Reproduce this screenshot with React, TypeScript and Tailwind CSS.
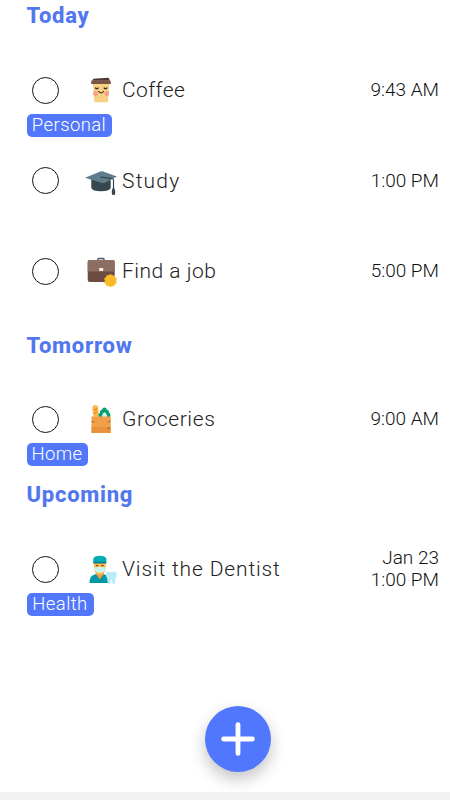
import { memo, type ReactNode } from 'react';
import clsx from 'clsx';

type Task = {
  title: string;
  titleClass: string;
  icon: ReactNode;
  time: string;
  date?: string;
  tag?: string;
  tagClass?: string;
};

const CoffeeIcon = () => (
  <svg viewBox="0 0 32 32" className="size-8">
    <path d="M7.800 9h16.700l-1.500 18.300q0 .9-1 .9H10.300q-1 0-1-.9z" fill="#f8d084" />
    <path d="M7 6.800 8.500 4.800 23.500 3.800l1.500 3z" fill="#4e342e" />
    <path d="M6.500 6.500h19l.5 3.500H6z" fill="#795548" />
    <circle cx="10.500" cy="19.500" r="2.400" fill="#f99b87" />
    <circle cx="21.800" cy="19.500" r="2.400" fill="#f99b87" />
    <g fill="none" stroke="#2b211c" strokeLinecap="round" strokeWidth="1.200">
      <path d="M10.500 14q1.300 1.500 2.600 0M19.200 14q1.300 1.500 2.600 0" />
      <path d="M13.800 17.500q2.300 3 4.600 0" />
    </g>
  </svg>
);

const StudyIcon = () => (
  <svg viewBox="0 0 32 32" className="size-8">
    <path d="M6.300 14v9q1.500 3.300 9.700 3.300T25.700 23v-9z" fill="#37474f" />
    <path d="m0 12.700 16-6.500q1 0 2 .4L32 11.500l-12.500 6.200q-1.500.6-3 0z" fill="#607d8b" />
    <path
      d="m15.500 12 12 1.800q1 .2 1 1.200v9"
      fill="none"
      stroke="#2b3b43"
      strokeWidth="1.100"
    />
    <path d="M27.800 23h1.400q2 4 .3 7h-2q-1.700-3 .3-7z" fill="#37474f" />
  </svg>
);

const JobIcon = () => (
  <svg viewBox="0 0 32 32" className="size-8">
    <path d="M13 6V4.300q0-.8.8-.8h4.400q.8 0 .8.800V6" fill="none" stroke="#455a64" strokeWidth="1.500" />
    <rect x="2.700" y="5" width="27" height="22" rx="2" fill="#6d4c41" />
    <path d="M2.700 16.500h27V7q0-2-2-2h-23q-2 0-2 2z" fill="#8d6e63" />
    <rect x="14.200" y="13" width="4" height="3" rx=".5" fill="#fff3e0" />
    <path
      d="m25.500 19 1.700 1.300 2.200-.1.600 2.100 1.800 1.200-.8 2.200.8 2.100-1.800 1.200-.6 2.100-2.200-.1-1.700 1.200-1.800-1.200-2.200.1-.6-2.100-1.800-1.200.8-2.100-.8-2.200 1.800-1.200.6-2.100 2.200.1z"
      fill="#fbb829"
    />
  </svg>
);

const GroceriesIcon = () => (
  <svg viewBox="0 0 32 32" className="size-8">
    <path d="m8.500 15-1.200-9.500Q7.300 2.300 10 2q3 0 3.200 3l.8 10z" fill="#ffb74d" />
    <path d="m9 7.500 2.800-2.200m-2.300 5.200 2.800-2.200" stroke="#e8892c" strokeWidth="1.300" />
    <path
      d="M14 14.500q-1.500-3.500 1-4.800-.5-2.500 2-2.900.5-2.500 2.500-2.400 2 0 2.400 2.300 2.400.4 2 2.900 2.400 1.300 1.100 4.900z"
      fill="#0a9f72"
    />
    <path d="M17 14.500q-.2-4 2.500-5.300 2.800 1.300 2.500 5.300z" fill="#d9f5ec" />
    <path d="M6.500 13.500h19.200V30H6.500z" fill="#f0a04b" />
    <path d="M6.500 24h19.200v6H6.500z" fill="#e8923d" />
    <path d="m6.500 18.500 3 .7M25.700 18l-3 1M22 25.500l3-.7" stroke="#9c5a20" strokeWidth=".9" />
  </svg>
);

const DentistIcon = () => (
  <svg viewBox="0 0 32 32" className="size-8">
    <path d="M4.500 30q0-7.500 5-8.200L12 20h5.500l2.500 1.800q4.500.7 4.500 8.200z" fill="#0097a7" />
    <path d="m10.500 20.800 4.300 5.700 4.300-5.700z" fill="#ef9847" />
    <path d="M9 8h11.700v6q0 7.500-5.900 8-5.800-.5-5.800-8z" fill="#ffb74d" />
    <path d="M9 14q2 .5 3 0h5.500q1.200.5 3.200 0v2q-1 3.500-5.900 4-4.800-.5-5.800-4z" fill="#c9f4f1" />
    <path d="M8.300 10V5.500q1-2.500 6.500-2.800 5.500.3 6.500 2.800V10z" fill="#00acb5" />
    <path d="M8.300 8.800h13v1.700h-13z" fill="#00838f" />
    <path d="M11 12.600h2m3.500 0h2" stroke="#6b4521" strokeWidth="1.200" />
    <path
      d="M23.500 18.700q2.500 1.300 4.500 0 3.800-.6 3.600 3.300-.2 2.200-1.200 3.500-.2 6-2 6-1 0-1.300-4-.8-1-1.600 0-.3 4-1.300 4-1.800 0-2-6-1-1.300-1.200-3.500-.200-3.900 2.500-3.300"
      fill="#b8ecfb"
    />
  </svg>
);

const sections: {
  name: string;
  headingClass: string;
  tasks: Task[];
}[] = [
  {
    name: 'Today',
    headingClass: 'h-[60px] -mt-[15px]',
    tasks: [
      {
        title: 'Coffee',
        titleClass: 'tracking-[0.4px]',
        icon: <CoffeeIcon />,
        time: '9:43 AM',
        tag: 'Personal',
        tagClass: 'w-[85px]',
      },
      {
        title: 'Study',
        titleClass: 'tracking-[1.2px]',
        icon: <StudyIcon />,
        time: '1:00 PM',
      },
      {
        title: 'Find a job',
        titleClass: 'tracking-[0.5px]',
        icon: <JobIcon />,
        time: '5:00 PM',
      },
    ],
  },
  {
    name: 'Tomorrow',
    headingClass: 'h-[58px]',
    tasks: [
      {
        title: 'Groceries',
        titleClass: 'tracking-[0.6px]',
        icon: <GroceriesIcon />,
        time: '9:00 AM',
        tag: 'Home',
        tagClass: 'w-[61px]',
      },
    ],
  },
  {
    name: 'Upcoming',
    headingClass: 'h-[60px]',
    tasks: [
      {
        title: 'Visit the Dentist',
        titleClass: 'tracking-[0.85px]',
        icon: <DentistIcon />,
        date: 'Jan 23',
        time: '1:00 PM',
        tag: 'Health',
        tagClass: 'w-[67px]',
      },
    ],
  },
];

const TaskRow = memo(({ task }: { task: Task }) => (
  <li className="h-[90px] pt-[22px]">
    <div className="flex h-[46px] items-center pl-[5px]">
      <button
        className="size-[27px] shrink-0 rounded-full border-[1.5px] border-[#111]"
        aria-label={task.title}
      />
      <span className="ml-[26px] shrink-0">{task.icon}</span>
      <span
        className={clsx(
          'ml-[5.5px] whitespace-nowrap text-[21px] leading-6 font-[350] text-[#222]',
          task.titleClass,
        )}
      >
        {task.title}
      </span>
      <span className="ml-auto text-right text-[19px] leading-[22px] font-[350] whitespace-nowrap text-[#111]">
        {task.date && <span className="block">{task.date}</span>}
        <span className="block">{task.time}</span>
      </span>
    </div>
    {task.tag && (
      <span
        className={clsx(
          'mt-px flex h-[22.5px] items-center justify-center rounded-[5px] bg-[#5277fa] text-[18.5px] leading-none font-[350] tracking-[0.4px] text-white',
          task.tagClass,
        )}
      >
        {task.tag}
      </span>
    )}
  </li>
));

TaskRow.displayName = 'TaskRow';

export default function App() {
  return (
    <div className="flex h-[800px] w-[450px] flex-col overflow-hidden bg-white font-[Roboto,sans-serif]">
      <main className="h-[706px] shrink-0 pr-[11px] pl-[26.5px]">
        {sections.map((section) => (
          <section key={section.name}>
            <h2
              className={clsx(
                'flex items-center pt-px text-[22px] font-extrabold tracking-[0.75px] text-[#5277ee]',
                section.headingClass,
              )}
            >
              {section.name}
            </h2>
            <ul className="flex flex-col gap-[0.5px]">
              {section.tasks.map((task) => (
                <TaskRow key={task.title} task={task} />
              ))}
            </ul>
          </section>
        ))}
      </main>
      <button
        className="ml-[205px] flex size-[66px] shrink-0 items-center justify-center rounded-full bg-[#5277ff] shadow-[0_7px_16px_rgba(0,0,0,0.24)]"
        aria-label="Add task"
      >
        <svg viewBox="0 0 34 34" className="size-[34px]">
          <path d="M17 2.600v28.800M2.600 17h28.800" stroke="white" strokeWidth="4.800" strokeLinecap="round" />
        </svg>
      </button>
      <footer className="mt-auto h-2 shrink-0 bg-[#f2f2f2]" />
    </div>
  );
}
